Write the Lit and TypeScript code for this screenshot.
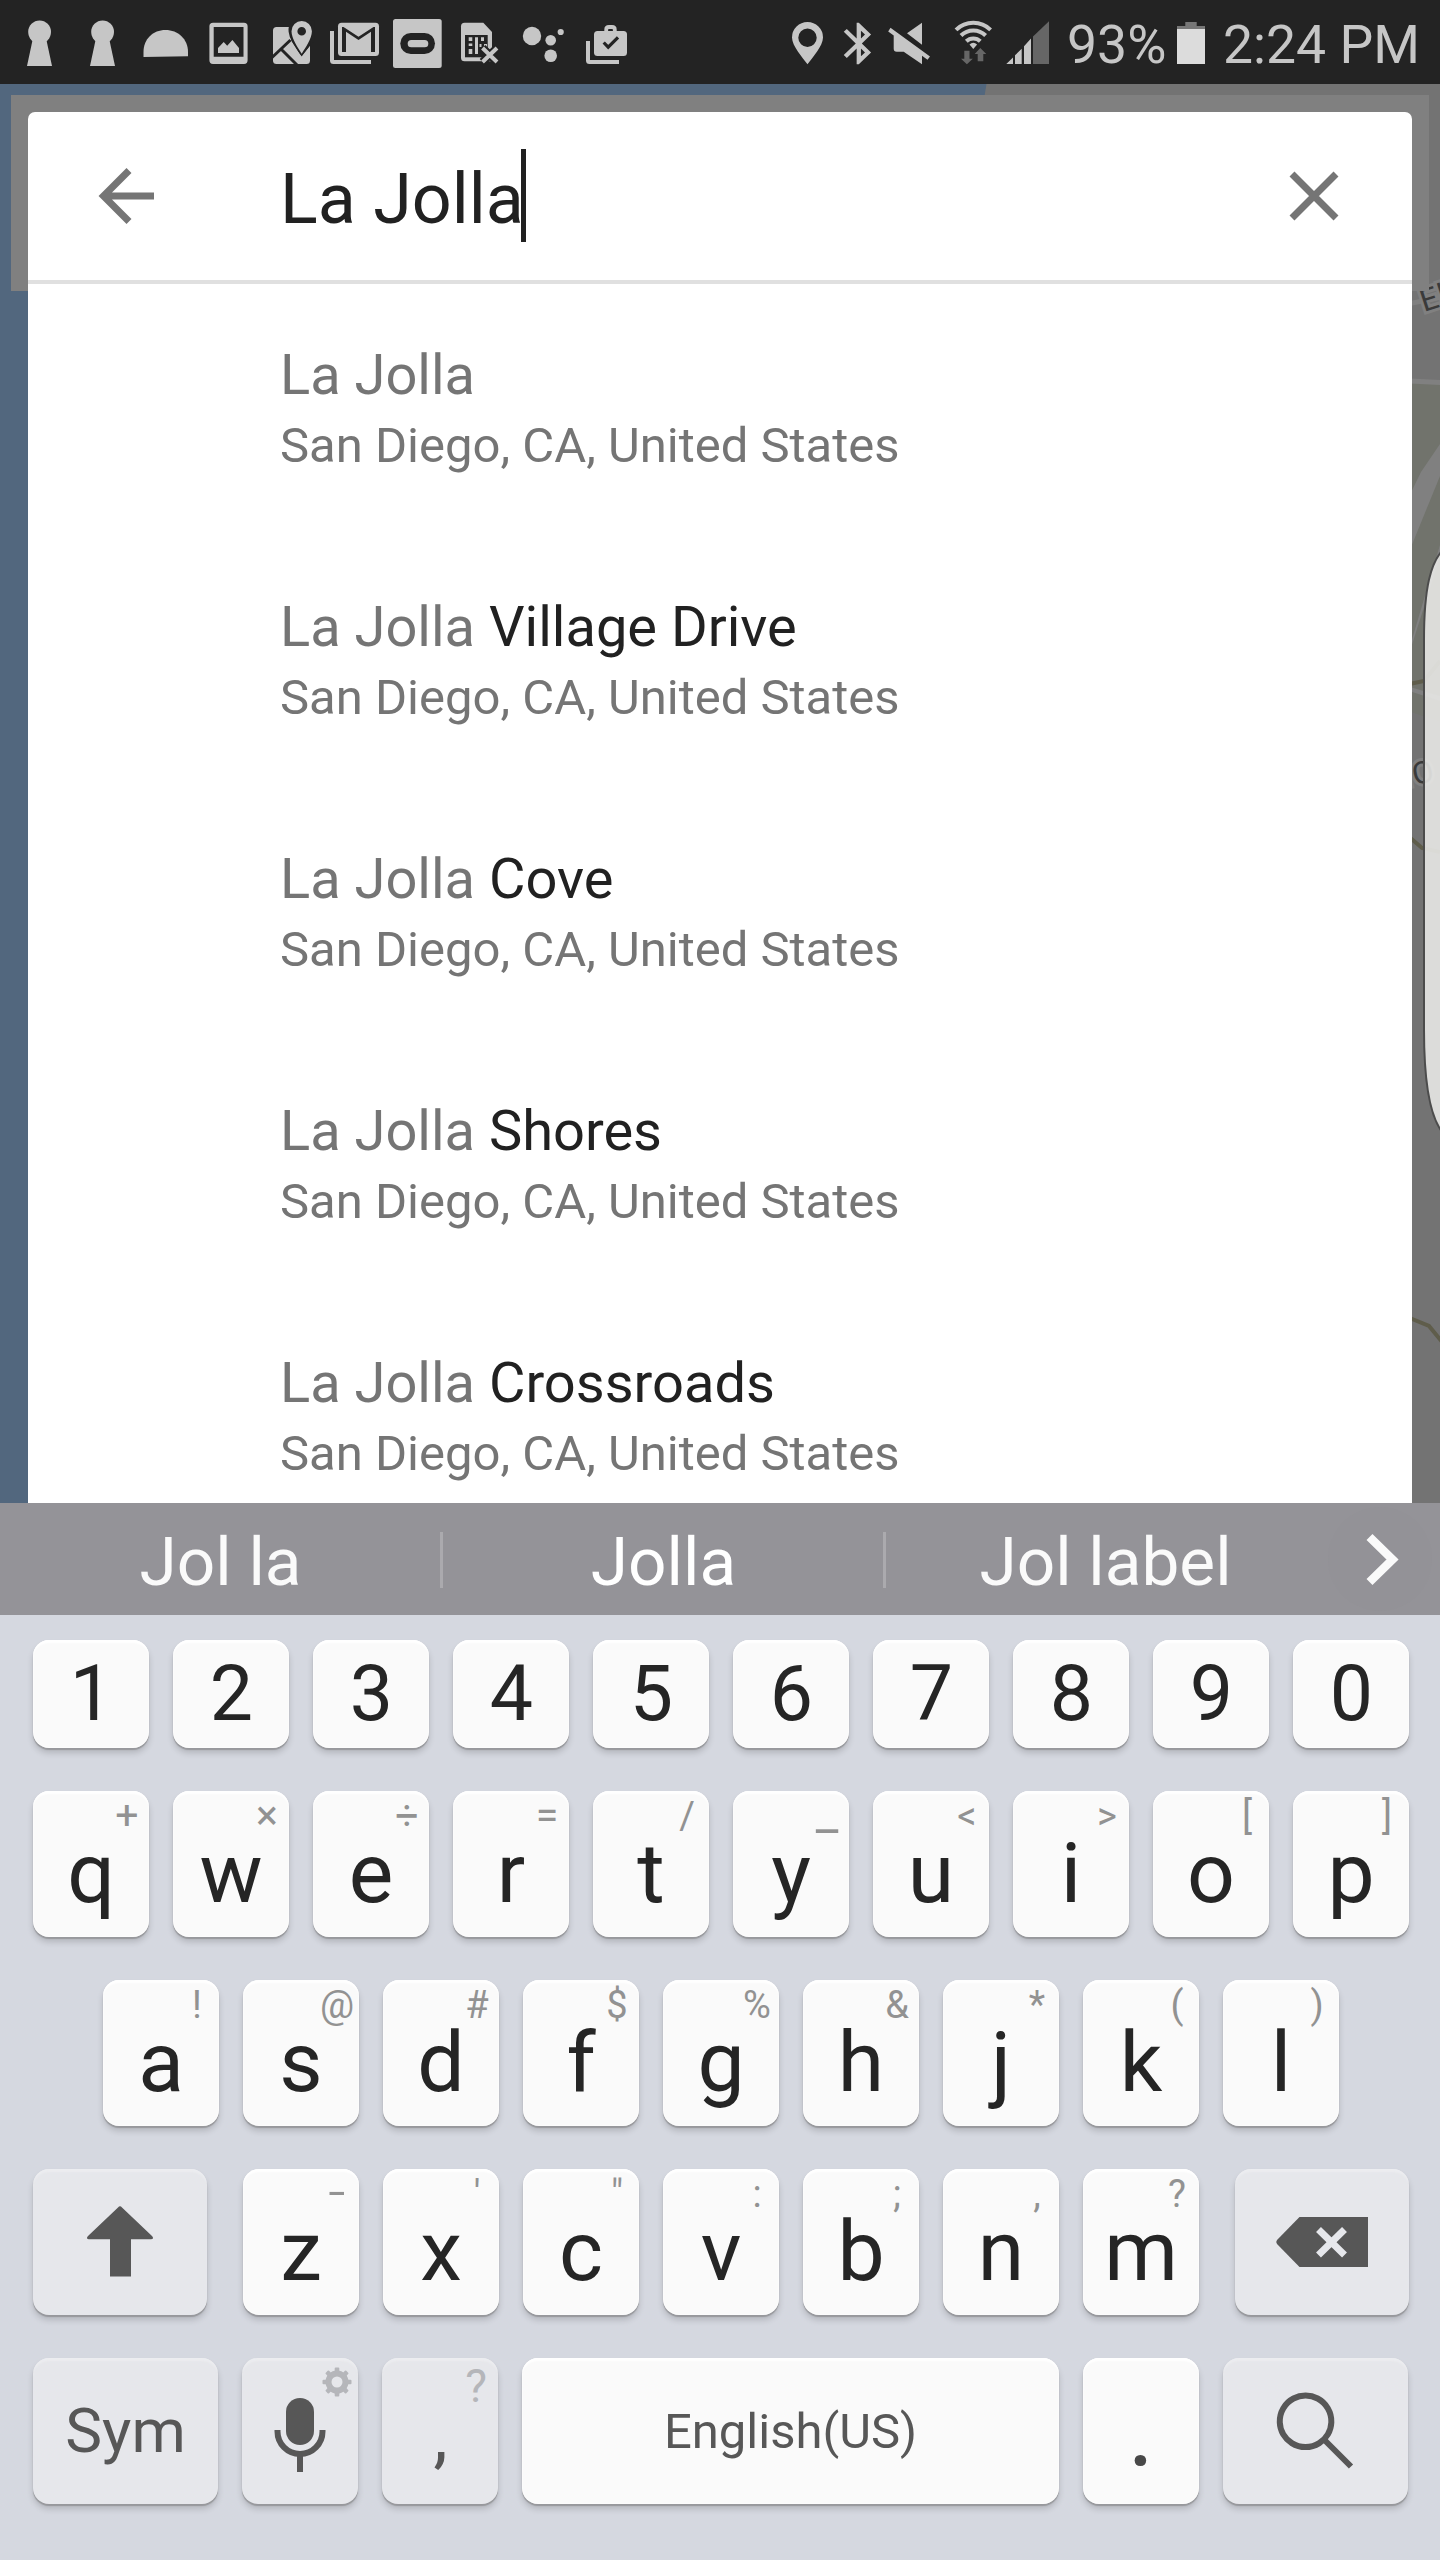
import { LitElement, html, svg, css } from "lit";
import { customElement, property } from "lit/decorators.js";
import { classMap } from "lit/directives/class-map.js";

interface StatusIcon { x: number; w: number; art: unknown; }

const leftIcons: StatusIcon[] = [
  { x: 0, w: 70, art: svg`<ellipse cx="39.6" cy="32" rx="11.4" ry="11.6"/><path d="M33 38h13l6 28H27z"/>` },
  { x: 70, w: 57, art: svg`<ellipse cx="102.6" cy="32" rx="11.4" ry="11.6"/><path d="M96 38h13l6 28H90z"/>` },
  { x: 127, w: 72, art: svg`<path d="M143.5 57v-5C143.500 39 153 30 165.500 30S188 39 188 52v4.200z"/>` },
  { x: 199, w: 61, art: svg`<path fill-rule="evenodd" d="M213 22.700h31q3.600 0 3.600 3.600v34q0 3.700-3.600 3.700h-31q-3.600 0-3.600-3.700v-34q0-3.600 3.600-3.600zM213.700 27v29.700h29.800V27z"/><path d="M218 53v-5l5.700-6 3.500 3.700 5.200-5.700 6.600 8v5z"/>` },
  { x: 260, w: 62, art: svg`<rect x="273" y="27" width="37" height="37" rx="3.500"/><g class="cut"><path d="M272 57.500L290.500 40M280.500 48.500L297.500 65.500" fill="none"/><path d="M301.700 54.500l-7.800-12.500C290 36 288 27 293 22h20v18z"/><path d="M291 40l10.700 16.500 9-13V27h-12z" stroke="none"/></g><path fill-rule="evenodd" d="M301.700 53.700C298 48 291.500 38.500 291.500 31.300a10.200 10.200 0 0 1 20.400 0c0 7.200-6.500 16.700-10.200 22.400zM301.700 27a4.300 4.300 0 1 0 0 8.600 4.300 4.300 0 0 0 0-8.600z"/><path d="M310 46v12l-8.300 0-10.700-11 1.500-1.700 9.200 11.300z"/>` },
  { x: 322, w: 64, art: svg`<path d="M330 31h4v29h37v4h-37.500q-3.500 0-3.500-3.500z"/><rect x="338" y="22.700" width="41" height="33.300" rx="3.500"/><path class="hole" d="M342 52V27h1.500l15 9.700L373.500 27h1.500v25h-4V31.800l-12.500 8.200L346 31.800V52z"/>` },
  { x: 386, w: 64, art: svg`<rect x="393" y="19" width="48.700" height="49" rx="2.500"/><rect class="hole" x="400.300" y="33" width="34.700" height="21" rx="10.500"/><rect x="407.700" y="40" width="20.600" height="7.300" rx="3.600"/>` },
  { x: 450, w: 60, art: svg`<path d="M464.500 22.700h18.800L492 32v29.300h-27.500q-3.500 0-3.500-3.500V26.200q0-3.500 3.500-3.500z"/><path class="hole" d="M465 35h22.700v22.300H465z"/><path d="M468.700 37.300h3.600V41h-3.600zm0 6.200h3.600v2.500h-3.600zm0 5.500h3.600v5h-3.600zM475 37.300h3V54h-3zM481 37.300h3V41h-3zM479.500 44h2v3h-2zM484 44h3v3h-3z"/><path class="slash-back" d="M482.500 48l14.500 14M497 48l-14.500 14"/><path class="slash" d="M482.500 48l14.500 14M497 48l-14.500 14"/>` },
  { x: 510, w: 65, art: svg`<circle cx="532" cy="36" r="9.200"/><circle cx="560.700" cy="32" r="3.100"/><circle cx="550.700" cy="40.300" r="5.300"/><circle cx="550.700" cy="55.700" r="6.300"/>` },
  { x: 575, w: 65, art: svg`<path d="M586 41h4v19h29v4h-29.500q-3.500 0-3.500-3.500z"/><rect x="594" y="31" width="33" height="25" rx="3.500"/><path d="M606.200 32v-2.300q0-2.700 2.700-2.700h3.200q2.700 0 2.700 2.700V32" fill="none" stroke="#c6c6c6" stroke-width="3.800"/><path d="M603.700 42.500l4.500 4.700 9.800-9.800" fill="none" stroke="#232323" stroke-width="3.200"/>` },
];

const rightIcons: StatusIcon[] = [
  { x: 780, w: 52, art: svg`<path fill-rule="evenodd" d="M807.500 64.300C803 58 792 46 792 37.500a15.500 15.500 0 0 1 31 0c0 8.500-11 20.500-15.500 26.800zM807.500 28.500a9.200 9.200 0 1 0 0 18.400 9.200 9.200 0 0 0 0-18.400z"/>` },
  { x: 832, w: 48, art: svg`<path transform="translate(833 18.500) scale(2.150 2.080)" d="M17.710 7.710L12 2h-1v7.590L6.410 5 5 6.410 10.590 12 5 17.590 6.410 19 11 14.410V22h1l5.710-5.710-4.300-4.290 4.300-4.290zM13 5.830l1.880 1.880L13 9.590V5.830zm1.880 10.460L13 18.170v-3.760l1.880 1.880z"/>` },
  { x: 880, w: 60, art: svg`<path d="M907 33.300L922 22.700v22zM890.500 27.700L930 56.500l-2.500 3.300-5.500-4v8.500l-18.300-12.600h-7q-3 0-3-3V35.500l-5.500-4z"/>` },
  { x: 940, w: 60, art: svg`<g fill="none" stroke="#c6c6c6" stroke-width="4"><path d="M956 29.800a24.600 24.600 0 0 1 34.600 0"/><path d="M961 35.500a17.400 17.400 0 0 1 24.600 0"/><path d="M966.300 41.300a10 10 0 0 1 14 0"/></g><path d="M969.500 44.500q3.800-3.600 7.600 0l-3.800 4.500z"/><path class="dim" d="M964.300 50.700h5.200v8h3.300l-5.900 5.500-5.900-5.500h3.300zM980.300 48l6 6h-3v7.200h-5.600V54h-3z"/>` },
  { x: 1000, w: 66, art: svg`<path d="M1006.300 64l6.700-6.500V64zM1015 55.300l6.700-6.500V64H1015zM1024 46.200l7-7.700V64h-7z"/><path class="dim" d="M1033 36.500l16-15.200V64h-16z"/>` },
];

@customElement("status-bar")
class StatusBar extends LitElement {
  static styles = css`
    :host { display: flex; height: 84px; width: 1440px; background: #232323; color: #c6c6c6; font: 53.500px/84px Roboto, sans-serif; }
    svg { display: block; flex: none; fill: #c6c6c6; }
    .spacer { flex: 1; }
    .hole { fill: #232323; }
    .cut { fill: #232323; stroke: #232323; stroke-width: 3; }
    .dim { fill: #666; }
    .slash-back { fill: none; stroke: #232323; stroke-width: 8; }
    .slash { fill: none; stroke: #c6c6c6; stroke-width: 4; }
    .text { white-space: pre; padding-top: 3px; height: 81px; }
    .percent { width: 105px; padding-left: 1px; }
    .clock { width: 217px; padding-left: 1px; }
    .charge { fill: #dcdcdc; }
    .cap { fill: #777; }
  `;
  private icon(i: StatusIcon) {
    return html`<svg width=${i.w} height="84" viewBox="${i.x} 0 ${i.w} 84">${i.art}</svg>`;
  }
  render() {
    return html`
      ${leftIcons.map((i) => this.icon(i))}
      <span class="spacer"></span>
      ${rightIcons.map((i) => this.icon(i))}
      <span class="text percent">93%</span>
      <svg width="50" height="84" viewBox="1172 0 50 84">
        <path class="cap" d="M1185.300 22h11.400v4h8.300v3h-28v-3h8.300z"/>
        <path class="charge" d="M1177 29h28v35h-28z"/>
      </svg>
      <span class="text clock">2:24 PM</span>`;
  }
}

@customElement("map-backdrop")
class MapBackdrop extends LitElement {
  static styles = css`
    :host { display: block; }
    svg { display: block; }
    .label { font: 31px Roboto, sans-serif; fill: #3a3a3a; stroke: #808080; stroke-width: 6px; paint-order: stroke; letter-spacing: 1px; }
    .road { fill: #808080; }
    .trail { fill: none; stroke: #5f5d4b; stroke-width: 4; }
  `;
  render() {
    return html`<svg width="1440" height="1419" viewBox="0 84 1440 1419">
      <path fill="#737373" d="M0 84h1440v1419H0z"/>
      <path fill="#52677e" d="M0 84h986.500l-2 12-200 300v1107H0z"/>
      <path fill="#71736c" d="M1400 382h40v340l-40-14z"/>
      <path class="road" d="M1400 378l40 2v5l-40-2zM1400 303l40-8v5l-40 8zM1400 515l21-43 19-28v32l-40 98zM1400 680l40-135v12l-40 125zM1400 684l40 12v5l-40-13z"/>
      <path class="trail" d="M1400 686l24-5 16-20M1400 829l22 19 18 4M1400 1314l29 12 14 17"/>
      <text class="label" transform="translate(1424 312) rotate(-18)">El</text>
      <text class="label" transform="translate(1387 791) rotate(-12)">MO</text>
      <path fill="#808080" d="M11 95h1418v196H11z"/>
      <path fill="#e8e8e6" fill-opacity=".9" stroke="#4c4c4c" stroke-width="2" d="M1446 547C1430 560 1424 590 1424 640V1030C1424 1085 1430 1122 1446 1136z"/>
    </svg>`;
  }
}

const places = ["", "Village Drive", "Cove", "Shores", "Crossroads"];

@customElement("search-card")
class SearchCard extends LitElement {
  static styles = css`
    :host { display: flex; flex-direction: column; background: #fff; border-radius: 7px 7px 0 0; overflow: hidden; font-family: Roboto, sans-serif; }
    .bar { display: flex; align-items: center; height: 168px; border-bottom: 4px solid #e0e0e0; flex: none; }
    .bar svg { display: block; fill: none; stroke: #757575; stroke-width: 7; }
    .query { font-size: 70px; line-height: 90px; color: #212121; padding-top: 5px; width: 241px; white-space: pre; }
    .caret { width: 5px; height: 93px; background: #212121; margin-bottom: 1px; }
    .spacer { flex: 1; }
    .place { flex: none; height: 252px; padding: 56px 0 0 252px; box-sizing: border-box; color: #757575; }
    .name { font-size: 56px; line-height: 71px; }
    .rest { color: #212121; }
    .area { font-size: 49px; line-height: 69px; }
  `;
  render() {
    return html`
      <div class="bar">
        <svg width="252" height="168" viewBox="28 112 252 168"><path d="M154 196h-49M129 170.500L103.500 196l25.500 25.500"/></svg>
        <span class="query">La Jolla</span><span class="caret"></span>
        <span class="spacer"></span>
        <svg width="132" height="168" viewBox="1280 112 132 168"><path d="M1292 174l44 44M1336 174l-44 44"/></svg>
      </div>
      ${places.map((p) => html`<div class="place">
        <div class="name">La Jolla <span class="rest">${p}</span></div>
        <div class="area">San Diego, CA, United States</div>
      </div>`)}`;
  }
}

@customElement("key-cap")
class KeyCap extends LitElement {
  @property() label = "";
  @property() hint = "";
  @property() kind = "letter";
  @property({ type: Boolean }) dark = false;
  static styles = css`
    :host { display: block; font-family: Roboto, sans-serif; }
    .cap { display: grid; grid-template-columns: 100%; height: 100%; align-items: start; justify-items: center; border-radius: 16px; background: #fafafa; color: #252525; box-shadow: inset 0 4px 2px -1px #fff, inset 0 0 1px 1px rgba(255,255,255,.5), 0 2px 1px #97989c, 0 5px 6px rgba(0,0,0,.16); }
    .dark { background: #e6e7eb; box-shadow: inset 0 4px 2px -1px #ecedf0, 0 2px 1px #97989c, 0 5px 6px rgba(0,0,0,.16); }
    .main, .hint { grid-area: 1 / 1; white-space: pre; }
    .main { font-size: 84px; line-height: 100px; margin-top: 33px; }
    .digit .main { font-size: 77px; margin-top: 4px; padding-left: 1px; }
    .word .main { font-size: 62px; margin-top: 23px; color: #575757; }
    .space .main { font-size: 49px; margin-top: 24px; color: #575757; }
    .comma .main { font-size: 72px; margin-top: 28px; color: #575757; padding-left: 1px; }
    .period .main { font-size: 102px; margin-top: 22px; color: #484848; }
    .hint { justify-self: end; width: 44px; text-align: center; font-size: 38px; line-height: 46px; margin-top: 2px; color: #929292; }
    .operator .hint { font-size: 41px; margin-top: 1px; }
    .comma .hint { font-size: 46px; line-height: 52px; color: #b5b6ba; }
    .wide .hint { font-size: 50px; margin-top: -2px; }
    .dash .hint { font-size: 62px; font-weight: 300; line-height: 46px; margin-top: 0; }
    .icon { grid-area: 1 / 1; display: block; line-height: 0; }
  `;
  render() {
    const cls = { cap: true, dark: this.dark, [this.kind]: true, wide: this.hint === "_", dash: this.hint === "-", operator: "+×÷=".includes(this.hint || " ") };
    return html`<div class=${classMap(cls)}>
      ${this.label ? html`<span class="main">${this.label}</span>` : ""}
      <span class="icon"><slot></slot></span>
      ${this.hint ? html`<span class="hint">${this.hint}</span>` : ""}
    </div>`;
  }
}

const topRow: [string, string][] = [["q", "+"], ["w", "×"], ["e", "÷"], ["r", "="], ["t", "/"], ["y", "_"], ["u", "<"], ["i", ">"], ["o", "["], ["p", "]"]];
const homeRow: [string, string][] = [["a", "!"], ["s", "@"], ["d", "#"], ["f", "$"], ["g", "%"], ["h", "&"], ["j", "*"], ["k", "("], ["l", ")"]];
const bottomRow: [string, string][] = [["z", "-"], ["x", "'"], ["c", "\""], ["v", ":"], ["b", ";"], ["n", ","], ["m", "?"]];
const gearTeeth = [0, 45, 90, 135, 180, 225, 270, 315];

@customElement("soft-keyboard")
class SoftKeyboard extends LitElement {
  static styles = css`
    :host { display: block; font-family: Roboto, sans-serif; }
    .suggestions { display: grid; grid-template-columns: 440px 3px 440px 3px 438px 116px; align-items: center; height: 112px; background: #949398; color: #fafafa; font-size: 67.500px; line-height: 80px; text-align: center; }
    .word { padding: 6px 0 0 1px; white-space: pre; }
    .best { color: #fff; }
    .divider { height: 56px; margin-top: 1px; background: #abaaae; }
    .suggestions svg { display: block; }
    .keys { display: flex; flex-direction: column; gap: 43px; height: 945px; box-sizing: border-box; padding: 25px 32px 0 33px; background: #d5d8e0; }
    .row { display: flex; gap: 24px; height: 146px; }
    .digits { height: 108px; }
    .home { padding-left: 70px; }
    key-cap { width: 116px; flex: none; }
    .edge { width: 174px; }
    .first { margin-right: 12px; }
    .last { margin-left: 12px; }
    .side { width: 185px; }
    .spacebar { width: 537px; }
    svg { display: block; fill: #575757; }
    .line { fill: none; stroke: #575757; stroke-width: 6; }
    .gear { fill: #b5b6ba; }
    .gear-ring { fill: none; stroke: #b5b6ba; stroke-width: 6; }
  `;
  private letters(row: [string, string][]) {
    return row.map(([k, h]) => html`<key-cap .label=${k} .hint=${h}></key-cap>`);
  }
  render() {
    return html`
      <div class="suggestions">
        <span class="word">Jol la</span><span class="divider"></span>
        <span class="word best">Jolla</span><span class="divider"></span>
        <span class="word">Jol label</span>
        <svg width="116" height="112" viewBox="1324 1503 116 112"><circle cx="1380" cy="1559" r="52" fill="#939297"/><path d="M1369.500 1537l23 22.500-23 22.500" fill="none" stroke="#fafafa" stroke-width="8.500"/></svg>
      </div>
      <div class="keys">
        <div class="row digits">${"1234567890".split("").map((d) => html`<key-cap .label=${d} kind="digit"></key-cap>`)}</div>
        <div class="row">${this.letters(topRow)}</div>
        <div class="row home">${this.letters(homeRow)}</div>
        <div class="row">
          <key-cap class="edge first" dark>
            <svg width="174" height="146" viewBox="33 2169 174 146"><path d="M118 2207.500q2-2.500 4 0l30 28.500q2.500 3-1 3.300H131v37.200h-21v-37.200H89q-3.500-.3-1-3.300z"/></svg>
          </key-cap>
          ${this.letters(bottomRow)}
          <key-cap class="edge last" dark>
            <svg width="174" height="146" viewBox="1235 2169 174 146"><path d="M1277 2240l22.500-23h68.500v50h-68.500l-22.500-23q-1.600-2 0-4z"/><path d="M1318.500 2229.500l26 25.500M1344.500 2229.500l-26 25.500" fill="none" stroke="#e6e7eb" stroke-width="7"/></svg>
          </key-cap>
        </div>
        <div class="row">
          <key-cap class="side" label="Sym" kind="word" dark></key-cap>
          <key-cap dark>
            <svg width="116" height="146" viewBox="242 2358 116 146">
              <rect x="286" y="2398" width="28" height="47" rx="14"/>
              <path class="line" d="M277.500 2430v1.500a22.500 22.500 0 0 0 45 0v-1.500M300 2454v18"/>
              <g transform="translate(337 2382)"><circle class="gear-ring" r="8.500"/>${gearTeeth.map((a) => svg`<rect class="gear" x="-2.300" y="-14.500" width="4.600" height="5" rx="1" transform="rotate(${a})"/>`)}</g>
            </svg>
          </key-cap>
          <key-cap label="," hint="?" kind="comma" dark></key-cap>
          <key-cap class="spacebar" label="English(US)" kind="space"></key-cap>
          <key-cap label="." kind="period"></key-cap>
          <key-cap class="side" dark>
            <svg width="185" height="146" viewBox="1223 2358 185 146"><path class="line" d="M1305.500 2395.500a25.800 25.800 0 1 0 .1 0zM1324.500 2440l26.500 26.500"/></svg>
          </key-cap>
        </div>
      </div>`;
  }
}

@customElement("app-root")
class AppRoot extends LitElement {
  static styles = css`
    :host { display: block; width: 1440px; height: 2560px; overflow: hidden; font-family: Roboto, sans-serif; }
    .stage { display: grid; height: 1419px; grid-template-columns: 1440px; grid-template-rows: 1419px; }
    .map { grid-area: 1 / 1; }
    .card { grid-area: 1 / 1; margin: 28px 28px 0; }
  `;
  render() {
    return html`
      <status-bar></status-bar>
      <div class="stage">
        <map-backdrop class="map"></map-backdrop>
        <search-card class="card"></search-card>
      </div>
      <soft-keyboard></soft-keyboard>`;
  }
}
